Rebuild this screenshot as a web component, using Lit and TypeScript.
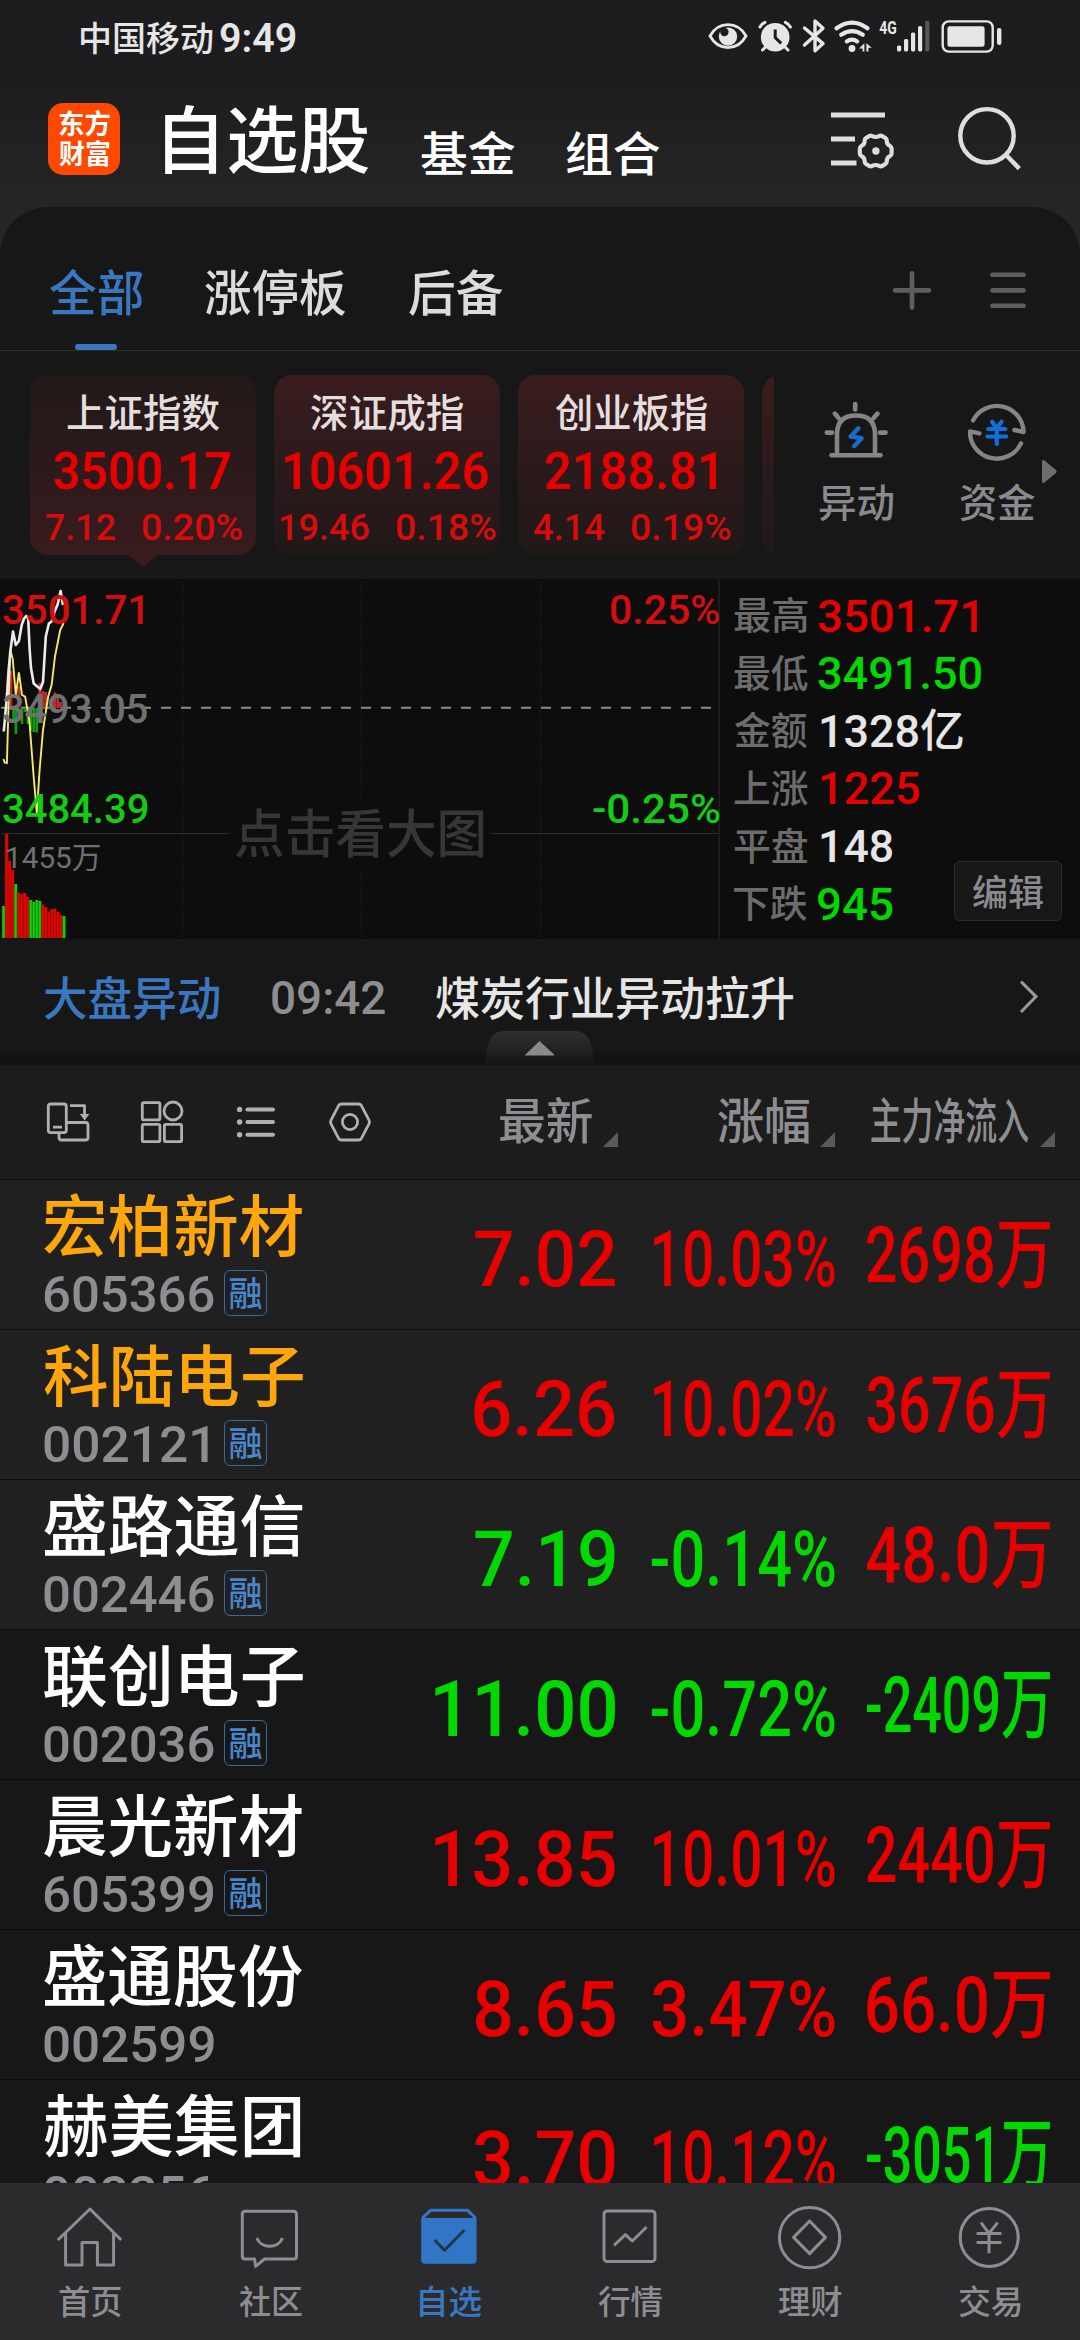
import { LitElement, html, svg, css, nothing } from "lit";
import { customElement, property } from "lit/decorators.js";
import { classMap } from "lit/directives/class-map.js";

const pen = document.createElement("canvas").getContext("2d")!;

/** One line of text whose visible width is condensed or stretched to `w` pixels. */
@customElement("fit-text")
class FitText extends LitElement {
  @property({ type: Number }) w = 100;
  @property({ type: Number }) size = 40;
  @property() text = "";

  static styles = css`
    :host { display: block; flex: none; white-space: nowrap; }
    .ink { display: block; width: max-content; transform-origin: 0 0; }
  `;

  updated() {
    const cs = getComputedStyle(this);
    pen.font = `${cs.fontWeight} ${this.size}px ${cs.fontFamily}`;
    const m = pen.measureText(this.text);
    const scale = this.w / (m.actualBoundingBoxLeft + m.actualBoundingBoxRight);
    this.style.width = `${this.w}px`;
    this.style.height = `${this.size}px`;
    const ink = this.renderRoot.querySelector(".ink") as HTMLElement;
    ink.style.fontSize = `${this.size}px`;
    ink.style.lineHeight = `${this.size}px`;
    ink.style.transform = `translateX(${m.actualBoundingBoxLeft * scale}px) scaleX(${scale})`;
  }

  render() {
    return html`<span class="ink">${this.text}</span>`;
  }
}

const fit = (text: string, w: number, size: number, cls = "") =>
  html`<fit-text class=${cls} .text=${text} .w=${w} .size=${size}></fit-text>`;

interface Card { name: string; nameW: number; price: string; priceW: number; diff: string; diffW: number; pct: string; pctW: number; active?: boolean }
const cards: Card[] = [
  { name: "上证指数", nameW: 153, price: "3500.17", priceW: 176.5, diff: "7.12", diffW: 69, pct: "0.20%", pctW: 100, active: true },
  { name: "深证成指", nameW: 152.5, price: "10601.26", priceW: 203, diff: "19.46", diffW: 88, pct: "0.18%", pctW: 99.5 },
  { name: "创业板指", nameW: 152.5, price: "2188.81", priceW: 171, diff: "4.14", diffW: 71, pct: "0.19%", pctW: 99.5 },
];

const stats: [string, string, number, string][] = [
  ["最高", "3501.71", 158.5, "up"],
  ["最低", "3491.50", 163.5, "down"],
  ["金额", "1328亿", 142, "flat lead"],
  ["上涨", "1225", 98, "up lead"],
  ["平盘", "148", 71.6, "flat lead"],
  ["下跌", "945", 74.4, "down"],
];

interface Stock { name: string; nameW: number; code: string; codeW: number; margin?: boolean; hot?: boolean; pinned?: boolean; price: string; priceW: number; pct: string; flow: string; dir: string; flowDir: string }
const stocks: Stock[] = [
  { name: "宏柏新材", nameW: 258.6, code: "605366", codeW: 170, margin: true, hot: true, pinned: true, price: "7.02", priceW: 140, pct: "10.03%", flow: "2698万", dir: "up", flowDir: "up" },
  { name: "科陆电子", nameW: 259, code: "002121", codeW: 163.7, margin: true, hot: true, pinned: true, price: "6.26", priceW: 140.5, pct: "10.02%", flow: "3676万", dir: "up", flowDir: "up" },
  { name: "盛路通信", nameW: 258.6, code: "002446", codeW: 170, margin: true, pinned: true, price: "7.19", priceW: 140, pct: "-0.14%", flow: "48.0万", dir: "down", flowDir: "up" },
  { name: "联创电子", nameW: 259, code: "002036", codeW: 170, margin: true, price: "11.00", priceW: 180, pct: "-0.72%", flow: "-2409万", dir: "down", flowDir: "down" },
  { name: "晨光新材", nameW: 258.4, code: "605399", codeW: 169.5, margin: true, price: "13.85", priceW: 180, pct: "10.01%", flow: "2440万", dir: "up", flowDir: "up" },
  { name: "盛通股份", nameW: 258.6, code: "002599", codeW: 170, price: "8.65", priceW: 140, pct: "3.47%", flow: "66.0万", dir: "up", flowDir: "up" },
  { name: "赫美集团", nameW: 256.6, code: "002356", codeW: 170, price: "3.70", priceW: 140.5, pct: "10.12%", flow: "-3051万", dir: "up", flowDir: "down" },
];

const UP = "#e60000";
const DOWN = "#00d800";

/* Minute volumes: bar height and direction, oldest first. */
const volumes: [number, boolean][] = [
  [32, false], [104, true], [77, true], [68, true], [54, false], [45.5, true], [44, true], [45, true], [41, true],
  [38, false], [36, false], [38, false], [37, false], [33.5, true], [31, true], [26.5, true], [29, true], [29.5, true],
  [26, true], [23, true], [22, false],
];

/* Momentum bars around the previous close: x and signed height. */
const momentum: [number, number][] = [
  [9.6, 37], [12.2, -13], [14.6, -26], [17.6, 22], [20.6, -16], [23.6, -4], [26.5, -16], [29.6, -23], [32.5, -24],
  [35.4, -24.5], [38.4, 25], [41.3, 17], [44.2, 16], [53.5, 15.5], [56.4, 12], [59.2, 6],
];

const chart = svg`
  <path d="M182.5 3V359M361.5 3V359M540.5 3V359" stroke="#2c2c2c" stroke-dasharray="1 2"/>
  <path d="M1 254.5H228M491 254.5H719" stroke="#2b2b2b"/>
  <path d="M361.5 224V294" stroke="#0d0d0d" stroke-width="3"/>
  <path d="M1 128.7H712" stroke="#8c8c8c" stroke-width="2" stroke-dasharray="10 10"/>
  ${momentum.map(([x, v]) => svg`<rect x=${x} y=${v > 0 ? 129 - v : 129} width="2.7" height=${Math.abs(v)} fill=${v > 0 ? "#c42a2a" : "#109a10"}/>`)}
  ${volumes.map(([h, up], i) => svg`<rect x=${2 + i * 3.02} y=${359 - h} width="3.05" height=${h} fill=${up ? UP : DOWN}/><path d=${`M${2 + i * 3.02} ${359 - h}V359`} stroke="#5a2a10" stroke-width=".7" opacity=".7"/>`)}
  <path d="M3.4 180L4.6 183.5L6.9 184L8.6 124L10.3 71L12.7 80L15.8 116L18.9 93.5L22 116L25.1 117.7L29.3 141L33.7 198L36.8 234L39.6 191L43 151L48.2 117.5L51.6 106L55 77.5L60.2 51L63.7 44" fill="none" stroke="#f8e868" stroke-width="1.9"/>
  <path d="M3.8 152.5L6.9 117.5L8.6 91L10.3 72.5L13 52.5L15.8 66L18.9 62L21.7 46L24.1 39.5L26.2 37L28.2 39.5L29.6 70L31 89L33.7 104.5L37.9 108L40.3 110L43 103L45.8 57.5L48.9 44.5L51.6 42.5L54.4 33L57.8 25L60.6 12L63 26" fill="none" stroke="#ececec" stroke-width="2.6" stroke-linejoin="round"/>
`;

const icons = {
  status: svg`
    <path d="M710 36C715 27 721 24.6 728 24.6S741 27 746 36C741 45 735 47.6 728 47.6S715 45 710 36Z" fill="none" stroke="#e6e6e6" stroke-width="2.8"/>
    <circle cx="728" cy="36.6" r="9.2" fill="#e6e6e6"/><circle cx="724.4" cy="32" r="4.2" fill="#1d1d1f"/>
    <circle cx="775.2" cy="37.2" r="14.3" fill="#e6e6e6"/>
    <path d="M775.2 29.5V37.5L781.2 43.3" fill="none" stroke="#1d1d1f" stroke-width="3"/>
    <path d="M760 27Q761.5 24 765 22.3M785.4 22.3Q789 24 790.4 27M762.5 50L766 46.5M788 50L784.5 46.5" fill="none" stroke="#e6e6e6" stroke-width="3" stroke-linecap="round"/>
    <path d="M804.5 28L823 43.6L815 50.8V21L823 28.2L804.5 45" fill="none" stroke="#e6e6e6" stroke-width="3.4" stroke-linejoin="round" stroke-linecap="round"/>
    <path d="M836.5 28.2Q852 17 867.5 28.2M841.2 34.8Q852 27.4 862.8 34.8M846.8 41.4Q852 38 857.2 41.4" fill="none" stroke="#e6e6e6" stroke-width="4.2" stroke-linecap="round"/>
    <circle cx="852" cy="48.5" r="3.4" fill="#e6e6e6"/>
    <path d="M859 48.6L864.4 43.2V51.4H862.6V48.6ZM866.4 43.2L871.8 47.8H868.4V51.4H866.4Z" fill="#e6e6e6"/>
    <text x="879.3" y="34.4" font-size="19" font-weight="700" textLength="17.6" lengthAdjust="spacingAndGlyphs" fill="#e6e6e6">4G</text>
    <g fill="#e6e6e6"><rect x="897" y="45.4" width="4.2" height="6" rx="1.6"/><rect x="904" y="39" width="4.2" height="12.4" rx="1.6"/><rect x="911" y="32.4" width="4.2" height="19" rx="1.6"/><rect x="918" y="26" width="4.2" height="25.4" rx="1.6"/></g>
    <rect x="925.2" y="20.8" width="4.2" height="30.6" rx="1.6" fill="#58585a"/>
    <rect x="942.7" y="21.4" width="50" height="30.2" rx="6" fill="none" stroke="#e6e6e6" stroke-width="2.4"/>
    <rect x="947.4" y="26.2" width="37.2" height="20.6" rx="2.4" fill="#e6e6e6"/><rect x="997" y="28" width="4.4" height="17" rx="2" fill="#e6e6e6"/>`,
  head: svg`
    <path d="M831 115H885M831 139H855M831 163H856.5" stroke="#dedede" stroke-width="5"/>
    <path d="M875.7 137C879.5 137 879.6 134.6 882.2 136.1L885.4 138C887.8 139.4 886 141 887.4 143.6C888.9 146.2 891.6 145.6 891.6 148.6V153.4C891.6 156.4 888.9 155.8 887.4 158.4C886 161 887.8 162.6 885.4 164L882.2 165.9C879.6 167.4 879.5 165 875.7 165C871.9 165 871.8 167.4 869.2 165.9L866 164C863.6 162.6 865.4 161 864 158.4C862.5 155.8 859.8 156.4 859.8 153.4V148.6C859.8 145.6 862.5 146.2 864 143.6C865.4 141 863.6 139.4 866 138L869.2 136.1C871.8 134.6 871.9 137 875.7 137Z" fill="none" stroke="#dedede" stroke-width="4.2" stroke-linejoin="round"/>
    <circle cx="875.9" cy="151" r="3.7" fill="#dedede"/>
    <circle cx="987" cy="135.8" r="26.7" fill="none" stroke="#dedede" stroke-width="4.4"/><path d="M1005.6 154.5L1019.3 168.6" stroke="#dedede" stroke-width="4.4"/>`,
  tabs: svg`<g stroke="#5e5e5e" stroke-width="4.6" stroke-linecap="round"><path d="M895 290.4H929M912 273.2V307.6M992.4 274.8H1023.6M992.4 290.4H1023.6M992.4 305.8H1023.6"/></g>`,
  siren: svg`
    <path d="M837 454V434.5Q837 415.5 856 415.5Q875 415.5 875 434.5V454M831.4 455.3H880.6M855.2 404V409.5M834.8 413.6L838.6 418M877.5 413.6L873.6 418M826.8 432.6H832M880 432.6H885.6" fill="none" stroke="#858585" stroke-width="4.6" stroke-linecap="round" stroke-linejoin="round"/>
    <path d="M858.4 428.3L850.6 436.5L861.6 438.2L854 446.2" fill="none" stroke="#1a6cc8" stroke-width="4.4" stroke-linejoin="round" stroke-linecap="round"/>`,
  funds: svg`
    <path d="M973 420.4A26.8 26.8 0 0 1 1023.6 432L1014.4 430M1021 443.4A26.8 26.8 0 0 1 970 431.4L979.4 433.4" fill="none" stroke="#858585" stroke-width="4.4" stroke-linecap="round" stroke-linejoin="round"/>
    <path d="M992 421.8L996.8 428L1001.6 421.8M988.2 429H1005.4M987.4 436.5H1006.2M996.8 429V444" fill="none" stroke="#1270dc" stroke-width="4.2" stroke-linecap="round"/>`,
  rotate: svg`<g fill="none" stroke="#b0b0b0" stroke-width="2.8" stroke-linejoin="round"><rect x="48.3" y="1104" width="18" height="28.6" rx="2.4"/><path d="M53 1127.2H62M59 1133.5V1137.5Q59 1140 61.5 1140H85.5Q88 1140 88 1137.5V1125Q88 1122.5 85.5 1122.5H67M70 1105.6H84.5V1115"/></g><path d="M79.8 1114H89.4L84.6 1120.5Z" fill="#b0b0b0"/>`,
  grid: svg`<g fill="none" stroke="#b0b0b0" stroke-width="2.8"><rect x="142.3" y="1102.6" width="17.6" height="17.2" rx="1.4"/><circle cx="173" cy="1111" r="9"/><rect x="142.3" y="1124.4" width="17.6" height="17.2" rx="1.4"/><rect x="164.4" y="1124.4" width="17.2" height="17.2" rx="1.4"/></g>`,
  list: svg`<path d="M247.4 1109.4H273M247.4 1122H273M247.4 1134.8H273" stroke="#b0b0b0" stroke-width="4" stroke-linecap="round"/><g fill="#b0b0b0"><circle cx="239.6" cy="1109.4" r="2.7"/><circle cx="239.6" cy="1122" r="2.7"/><circle cx="239.6" cy="1134.8" r="2.7"/></g>`,
  hex: svg`<g fill="none" stroke="#b0b0b0" stroke-width="2.8"><path d="M341.5 1104H358.5Q360.4 1104 361.4 1105.6L369 1120.2Q370 1122 369 1123.8L361.4 1138.4Q360.4 1140 358.5 1140H341.5Q339.6 1140 338.6 1138.4L331 1123.8Q330 1122 331 1120.2L338.6 1105.6Q339.6 1104 341.5 1104Z"/><circle cx="350" cy="1122" r="7.6"/></g>`,
};

const navItems = [
  { label: "首页", w: 62.4, art: svg`<path d="M57.8 2240L90 2209L121.2 2240M65.6 2233V2265H82V2242.6H97.4V2265H113.6V2233"/>` },
  { label: "社区", w: 63, art: svg`<path d="M245 2211.3H293.5Q296.5 2211.3 296.5 2214.3V2256Q296.5 2259 293.5 2259H264.5L255.6 2266.4L254.6 2259H245Q242.3 2259 242.3 2256V2214.3Q242.3 2211.3 245 2211.3ZM256.8 2238C261 2249 278.5 2249 282.4 2238"/>` },
  { label: "自选", w: 61, on: true, art: svg`<path d="M422.4 2218L430.8 2210.2H467.4L475.6 2218" stroke="#3478c8"/><path d="M421.2 2218H476.6V2260Q476.6 2263.8 472.8 2263.8H425Q421.2 2263.8 421.2 2260Z" fill="#3176c6" stroke="none"/><path d="M434.6 2240L444.5 2250.2L464.4 2230" stroke="#24344a"/>` },
  { label: "行情", w: 64, art: svg`<rect x="604" y="2211" width="51" height="50.4" rx="3"/><path d="M614 2245.4L625.4 2234.6L632.3 2241L646.6 2227"/>` },
  { label: "理财", w: 63.6, art: svg`<circle cx="809.6" cy="2237.6" r="30.2"/><path d="M809.6 2221L825.4 2237.4L809.6 2253.6L793.6 2237.4Z"/>` },
  { label: "交易", w: 61.6, art: svg`<circle cx="989.2" cy="2237.4" r="29"/><path d="M981 2222.6L989 2233.4L997.6 2222.6M976.6 2233.4H1001.4M976.6 2242.6H1001.4M989 2233.4V2253.2"/>` },
];

@customElement("app-root")
class AppRoot extends LitElement {
  static styles = css`
    :host { display: block; width: 1080px; height: 2340px; overflow: hidden; background: #171717; font-family: Roboto, "Noto Sans CJK SC", sans-serif; font-weight: 500; }
    svg { display: block; flex: none; }
    .screen { display: flex; flex-direction: column; height: 2340px; }
    .up { color: #e60000; }
    .down { color: #00d800; }
    .flat { color: #e6e6e6; }

    .top { flex: none; height: 255px; margin-bottom: -48px; background: linear-gradient(#1c1c1e 0, #1d1d1f 80px, #252525 207px, #252525 100%); }
    .status { display: flex; height: 72px; color: #e6e6e6; }
    .carrier { margin: 21.5px 8px 0 80.6px; }
    .clock { margin-top: 17.5px; font-weight: 600; }
    .status svg { margin: 14px 0 0 410px; }
    .head { display: flex; color: #fff; }
    .logo { flex: none; display: flex; flex-direction: column; align-items: center; gap: 3px; box-sizing: border-box; width: 72px; height: 72px; padding-top: 8.5px; margin: 31px 45px 0 48px; border-radius: 15px; background: #ff4800; font-weight: 700; }
    .h1 { margin-top: 35px; }
    .h2 { margin: 58.5px 0 0 51.5px; }
    .head svg { margin: 32px 0 0 170px; }

    .panel { position: relative; flex: none; border-radius: 48px 48px 0 0; background: #171717; }
    .tabs { display: flex; gap: 63.5px; box-sizing: border-box; height: 144px; padding: 63px 0 0 49.6px; border-bottom: 1px solid #2e2e2e; color: #dcdcdc; }
    .tab { display: flex; flex-direction: column; align-items: center; gap: 25px; }
    .tab.on { color: #3a77c0; }
    .bar { width: 42px; height: 6px; border-radius: 3px; background: #3a77c0; }
    .tabs svg { margin: -1px 0 0 325.7px; }

    .strip { display: flex; height: 228px; }
    .cards { display: flex; flex: none; gap: 18px; box-sizing: border-box; width: 774px; padding: 24px 0 0 30px; overflow: hidden; }
    .card { position: relative; flex: none; display: flex; flex-direction: column; align-items: center; box-sizing: border-box; width: 226px; height: 180px; padding-top: 20px; border-radius: 18px; background: linear-gradient(#3a1c1e, #2c1a1b 50%, #211818); }
    .card.active { background: linear-gradient(#221919, #2c1a1b 50%, #381b1d); }
    .card.active::after { content: ""; position: absolute; left: 98px; top: 180px; width: 30px; height: 12px; background: #381b1d; clip-path: polygon(0 0, 100% 0, 50% 100%); }
    .card-name { color: #e4dede; }
    .card-price { margin: 12.3px 1px 0 0; color: #e60000; font-weight: 600; }
    .card-sub { display: flex; gap: 26.5px; margin: 10.6px 0 0 2px; color: #d80c0c; }
    .tool { display: flex; flex-direction: column; align-items: center; gap: 20.5px; padding-top: 49px; margin-left: 45px; color: #8a8a8e; }
    .tool + .tool { margin-left: 66.4px; }
    .more { margin: 107px 0 0 6px; }

    .market { flex: none; display: flex; height: 360px; background: #0d0d0d; }
    .chart { position: relative; width: 720px; border-right: 2px solid #1c1c1c; box-sizing: border-box; }
    .mark { position: absolute; }
    .hi { left: 2.8px; top: 12px; color: #d40e0e; }
    .mid { left: 2.8px; top: 110.5px; color: #707070; }
    .lo { left: 2.8px; top: 210.5px; color: #14cc14; }
    .hip { right: -1px; top: 12px; color: #d40e0e; }
    .lop { right: -1px; top: 210.5px; color: #14cc14; }
    .vol { left: 7px; top: 263.5px; color: #707070; font-weight: 400; }
    .hint { left: 234.5px; top: 230.5px; color: #363636; }
    .stats { position: relative; flex: 1; padding: 0.3px 0 0 13.5px; }
    .stat { display: flex; height: 57.6px; }
    .stat .key { margin: 18px 11.4px 0 0; color: #6c6c6c; }
    .stat .val { margin-top: 14.4px; }
    .stat .lead { margin-left: 3px; }
    .edit { position: absolute; left: 234px; top: 282.3px; display: flex; justify-content: center; box-sizing: border-box; width: 108px; height: 60px; padding-top: 13.5px; border: 1px solid #2c2c2c; border-radius: 6px; background: #171717; color: #8a8a8e; }

    .news { position: relative; flex: none; display: flex; box-sizing: border-box; height: 126px; padding: 37px 0 0 44.4px; border-bottom: 12px solid #121212; }
    .tag { color: #3a77c0; }
    .time { margin: -0.8px 51.3px 0 52.3px; color: #8e8e92; }
    .title { color: #e6e6e6; }
    .news .go { margin: 2.5px 0 0 226px; }
    .handle { position: absolute; left: 484px; top: 92px; }

    .columns { flex: none; display: flex; box-sizing: border-box; height: 115px; padding-left: 44px; border-bottom: 1px solid #0b0b0b; background: #1c1c1c; color: #8e8e92; }
    .columns svg { margin: 34px 46px 0 0; }
    .columns .col { display: flex; gap: 11px; padding-top: 34px; }
    .columns .col svg { margin: 33px 0 0; }
    .c1 { margin-left: 80px; }
    .c2 { margin-left: 99.5px; }
    .c3 { margin-left: 36px; }

    .list { flex: 1; min-height: 0; overflow: hidden; }
    .row { display: grid; grid-template-columns: 390.4px 180px 220px auto; box-sizing: border-box; height: 150px; padding-left: 44.4px; border-bottom: 1px solid #0c0c0c; }
    .row.pinned { background: #202020; }
    .name { margin-top: 14.5px; color: #fff; }
    .hot { color: #ffa60a; }
    .line { display: flex; margin-top: 9px; color: #8e8e92; }
    .code { display: block; width: 179.8px; }
    .rz { display: flex; justify-content: center; box-sizing: border-box; width: 42.5px; height: 46px; padding-top: 5.5px; border: 1.5px solid #39689c; border-radius: 6px; color: #4a86cc; }
    .price { justify-self: end; margin-top: 42px; }
    .pct { justify-self: end; margin-top: 42px; }
    .flow { margin: 38px 0 0 32.7px; }

    .nav { flex: none; display: grid; grid-template-columns: repeat(6, 180px); height: 157px; background: #2b2b2d; color: #8e8e92; }
    .item { display: flex; flex-direction: column; align-items: center; gap: 12.5px; padding-top: 20px; }
    .item svg { fill: none; stroke: #8e8e92; stroke-width: 3; stroke-linejoin: round; }
    .item.on { color: #3a77c0; }
  `;

  render() {
    return html`<div class="screen">
      <div class="top">
        <div class="status">
          ${fit("中国移动", 131.4, 34.5, "carrier")}${fit("9:49", 75.8, 41, "clock")}
          <svg width="296" height="44" viewBox="706 14 296 44">${icons.status}</svg>
        </div>
        <div class="head">
          <div class="logo">${fit("东方", 51, 27)}${fit("财富", 51, 27)}</div>
          ${fit("自选股", 204, 72.5, "h1")}${fit("基金", 93.5, 47, "h2")}${fit("组合", 93.5, 47, "h2")}
          <svg width="192" height="72" viewBox="829 104 192 72">${icons.head}</svg>
        </div>
      </div>

      <div class="panel">
        <div class="tabs">
          <div class="tab on">${fit("全部", 92.4, 49)}<div class="bar"></div></div>
          <div class="tab">${fit("涨停板", 140.4, 49)}</div>
          <div class="tab">${fit("后备", 93.4, 49)}</div>
          <svg width="136" height="50" viewBox="892 269 136 50">${icons.tabs}</svg>
        </div>
        <div class="strip">
          <div class="cards">
            ${cards.map((c) => html`<div class=${classMap({ card: true, active: !!c.active })}>
              ${fit(c.name, c.nameW, 39, "card-name")}${fit(c.price, c.priceW, 52, "card-price")}
              <div class="card-sub">${fit(c.diff, c.diffW, 37)}${fit(c.pct, c.pctW, 37)}</div>
            </div>`)}
            <div class="card"></div>
          </div>
          <div class="tool"><svg width="74" height="64" viewBox="819 400 74 64">${icons.siren}</svg>${fit("异动", 74, 39)}</div>
          <div class="tool"><svg width="76" height="64" viewBox="959 400 76 64">${icons.funds}</svg>${fit("资金", 75.4, 39)}</div>
          <svg class="more" width="18" height="28" viewBox="0 0 18 28"><path d="M1 4V23Q1 26 3.5 24.4L15 15Q16.4 13.5 15 12L3.5 2.6Q1 1 1 4Z" fill="#6e6e6e"/></svg>
        </div>
      </div>

      <div class="market">
        <div class="chart">
          <svg width="718" height="360" viewBox="0 0 718 360">${chart}</svg>
          ${fit("3501.71", 139.4, 40, "mark hi")}${fit("3493.05", 144.6, 40, "mark mid")}${fit("3484.39", 144.6, 40, "mark lo")}
          ${fit("0.25%", 108, 40, "mark hip")}${fit("-0.25%", 126.4, 40, "mark lop")}
          ${fit("1455万", 93.5, 30, "mark vol")}${fit("点击看大图", 248.3, 52, "mark hint")}
        </div>
        <div class="stats">
          ${stats.map(([k, v, w, cls]) => html`<div class="stat">${fit(k, 73.5, 38, "key")}${fit(v, w, 45, "val " + cls)}</div>`)}
          <div class="edit">${fit("编辑", 70, 36)}</div>
        </div>
      </div>

      <div class="news">
        ${fit("大盘异动", 175.3, 46, "tag")}${fit("09:42", 113, 46.5, "time")}${fit("煤炭行业异动拉升", 357, 46, "title")}
        <svg class="go" width="20" height="36" viewBox="0 0 20 36"><path d="M2 2.6L17 17.6L2 33" fill="none" stroke="#9a9a9a" stroke-width="3"/></svg>
        <svg class="handle" width="111" height="32" viewBox="0 0 111 32">
          <defs><linearGradient id="fade" x1="0" y1="0" x2="0" y2="1"><stop offset="0" stop-color="#303030"/><stop offset="1" stop-color="#171717"/></linearGradient></defs>
          <path d="M0 32L4 14Q7 0 21 0H90Q104 0 107 14L111 32Z" fill="url(#fade)"/>
          <path d="M41.5 24L55.5 10.5L70 24Z" fill="#8a8a8a" stroke="#8a8a8a" stroke-linejoin="round"/>
        </svg>
      </div>

      <div class="columns">
        <svg width="48" height="46" viewBox="44 1099 48 46">${icons.rotate}</svg>
        <svg width="48" height="46" viewBox="138 1099 48 46">${icons.grid}</svg>
        <svg width="48" height="46" viewBox="232 1099 48 46">${icons.list}</svg>
        <svg width="48" height="46" viewBox="326 1099 48 46">${icons.hex}</svg>
        ${[["最新", 92, "c1"], ["涨幅", 91.7, "c2"], ["主力净流入", 157.7, "c3"]].map(([t, w, c]) => html`
          <div class="col ${c}">${fit(t as string, w as number, 48.5)}<svg width="15" height="15" viewBox="0 0 15 15"><path d="M15 0V15H0Z" fill="#5a5a5c"/></svg></div>`)}
      </div>

      <div class="list">
        ${stocks.map((s) => html`<div class=${classMap({ row: true, pinned: !!s.pinned })}>
          <div>
            ${fit(s.name, s.nameW, 66.7, s.hot ? "name hot" : "name")}
            <div class="line"><span class="code">${fit(s.code, s.codeW, 50)}</span>${s.margin ? html`<div class="rz">${fit("融", 32, 34)}</div>` : nothing}</div>
          </div>
          ${fit(s.price, s.priceW, 77, "price " + s.dir)}
          ${fit(s.pct, s.pct[0] === "1" ? 181 : 183, 77, "pct " + s.dir)}
          ${fit(s.flow, 183.3, 77, "flow " + s.flowDir)}
        </div>`)}
      </div>

      <div class="nav">
        ${navItems.map((n, i) => html`<div class=${classMap({ item: true, on: !!n.on })}>
          <svg width="70" height="70" viewBox="${i * 180 + 55} 2203 70 70">${n.art}</svg>${fit(n.label, n.w, 33)}
        </div>`)}
      </div>
    </div>`;
  }
}
